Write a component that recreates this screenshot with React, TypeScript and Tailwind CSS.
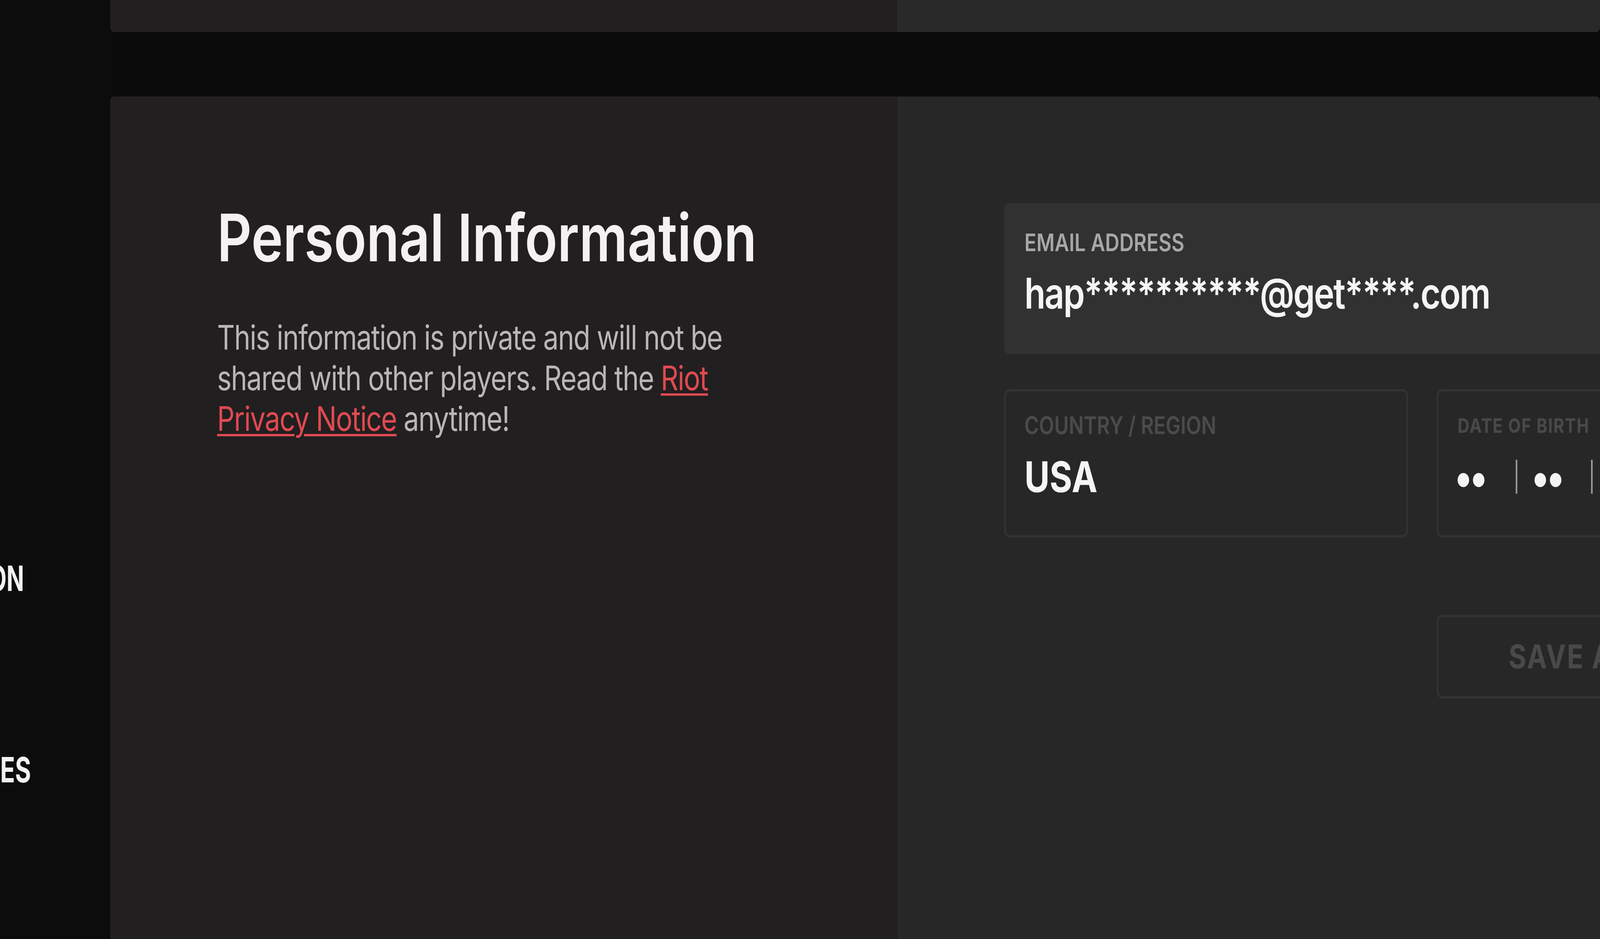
import React, { useEffect, useState } from "react";

const W = 5012;
const H = 2404;

function useFit() {
  const calc = () => ({
    x: Math.min(1, window.innerWidth / W),
    y: Math.min(1, window.innerHeight / H),
  });
  const [s, setS] = useState(calc);
  useEffect(() => {
    const on = () => setS(calc());
    window.addEventListener("resize", on);
    return () => window.removeEventListener("resize", on);
  }, []);
  return s;
}

function Dots({ n }: { n: number }) {
  return (
    <div className="flex gap-[12px] mt-[44px]">
      {Array.from({ length: n }).map((_, i) => (
        <div key={i} className="w-[36px] h-[36px] rounded-full bg-[#f4f4f4]" />
      ))}
    </div>
  );
}

function Divider() {
  return <div className="w-[5px] h-[87px] mt-[10px] bg-[#9b9a9a] shrink-0" />;
}

export default function App() {
  const s = useFit();
  return (
    <div className="w-screen h-screen overflow-hidden bg-[#0b0b0b]">
      <div
        className="w-[5012px] h-[2404px] flex overflow-hidden bg-[#0b0b0b] font-['Inter',sans-serif] origin-top-left"
        style={{ transform: `scale(${s.x}, ${s.y})` }}
      >
        {/* Sidebar */}
        <aside className="w-[345px] shrink-0 bg-[#0c0c0c] overflow-hidden flex flex-col pt-[1436px] gap-[400px]">
          <div className="w-[75px] h-[90px] flex justify-end whitespace-nowrap">
            <span className="block text-[90px] leading-none font-bold text-[#f2f2f2] origin-right scale-x-[0.8]">
              INFORMATION
            </span>
          </div>
          <div className="w-[97px] h-[90px] flex justify-end whitespace-nowrap">
            <span className="block text-[90px] leading-none font-bold text-[#f2f2f2] origin-right scale-x-[0.85]">
              PREFERENCES
            </span>
          </div>
        </aside>

        {/* Content */}
        <main className="flex-1 flex flex-col gap-[165px] min-w-0">
          {/* Previous card (bottom edge) */}
          <div className="h-[82px] shrink-0 flex rounded-b-[12px] overflow-hidden">
            <div className="w-[2465px] shrink-0 bg-[#231f20]" />
            <div className="flex-1 bg-[#2a292a]" />
          </div>

          {/* Personal information card */}
          <section className="flex-1 flex rounded-t-[12px] overflow-hidden min-w-0">
            <div className="w-[2465px] shrink-0 bg-[#221f20] pl-[335px] pt-[277px]">
              <h2 className="text-[168px] leading-none font-semibold tracking-[0px] text-[#f3f1f1]">
                Personal Information
              </h2>
              <p className="mt-[120px] text-[86px] leading-[104px] tracking-[-2px] text-[#bab6b5]">
                This information is private and will not be
                <br />
                shared with other players. Read the{" "}
                <a className="text-[#e04a51] underline decoration-[6px] underline-offset-[8px]">
                  Riot
                  <br />
                  Privacy Notice
                </a>{" "}
                anytime!
              </p>
            </div>

            <div className="flex-1 min-w-0 bg-[#282728] pl-[335px] pt-[273px] overflow-hidden">
              <div className="w-[2621px] grid grid-cols-2 gap-x-[89px] gap-y-[89px]">
                {/* Email */}
                <div className="col-span-2 rounded-[18px] bg-[#323132] px-[64px] pt-[70px] pb-[102px]">
                  <div className="h-[62px] text-[62px] leading-none font-semibold text-[#a9a6a6]">
                    EMAIL ADDRESS
                  </div>
                  <div className="mt-[45px] h-[108px] text-[108px] leading-none font-semibold tracking-[-3px] text-[#f5f5f5]">
                    hap**********@get****.com
                  </div>
                </div>

                {/* Country */}
                <div className="rounded-[18px] border-[6px] border-[#333233] pl-[58px] pt-[56px] pb-[95px]">
                  <div className="h-[62px] text-[62px] leading-none font-semibold text-[#4c4b4b]">
                    COUNTRY / REGION
                  </div>
                  <div className="mt-[47px] h-[108px] text-[108px] leading-none font-bold text-[#f5f5f5]">
                    USA
                  </div>
                </div>

                {/* Date of birth */}
                <div className="rounded-[18px] border-[6px] border-[#333233] pl-[60px] pt-[56px] pb-[95px]">
                  <div className="h-[62px] flex items-center text-[51px] leading-none font-bold tracking-[0.05em] text-[#4a4949]">
                    DATE OF BIRTH
                  </div>
                  <div className="mt-[47px] h-[108px] flex items-start">
                    <div className="w-[182px] shrink-0">
                      <Dots n={2} />
                    </div>
                    <Divider />
                    <div className="ml-[54px] w-[177px] shrink-0">
                      <Dots n={2} />
                    </div>
                    <Divider />
                    <div className="ml-[54px] w-[280px] shrink-0">
                      <Dots n={4} />
                    </div>
                  </div>
                </div>

                {/* Save */}
                <button className="col-start-2 mt-[109px] h-[214px] rounded-[18px] border-[6px] border-[#333233] flex items-center pl-[220px] text-[84px] leading-none font-bold tracking-[0.04em] text-[#4a494a] whitespace-nowrap">
                  SAVE ACCOUNT
                </button>
              </div>
            </div>
          </section>
        </main>
      </div>
    </div>
  );
}
